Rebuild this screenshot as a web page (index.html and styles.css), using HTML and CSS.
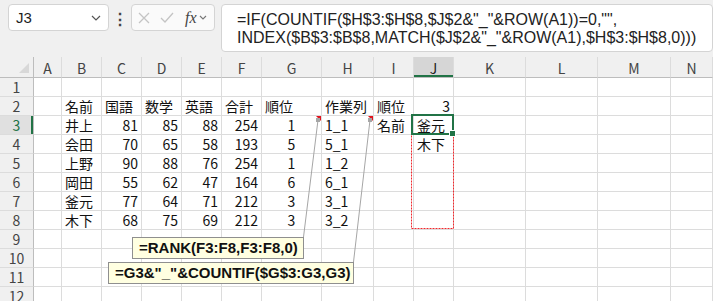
FILE: index.html
```html
<!DOCTYPE html>
<html lang="ja">
<head>
    <meta charset="UTF-8">
    <title>Book1 - Excel</title>
    <link rel="stylesheet" href="styles.css">
</head>
<body>
    <div class="toolbar">
        <div class="namebox">
            <span>J3</span>
            <svg class="chev" width="10" height="6" viewBox="0 0 10 6"><path d="M1 1l4 4 4-4" fill="none" stroke="#555" stroke-width="1.2"/></svg>
        </div>
        <div class="dots">&#8942;</div>
        <div class="fxbox">
            <svg class="ico" width="12" height="12" viewBox="0 0 12 12"><path d="M1 1l10 10M11 1L1 11" stroke="#c4c4c4" stroke-width="1.3"/></svg>
            <svg class="ico" width="14" height="12" viewBox="0 0 14 12"><path d="M1 6l4 4 8-9" fill="none" stroke="#c4c4c4" stroke-width="1.3"/></svg>
            <span class="fx">fx</span>
            <svg class="chev small" width="8" height="5" viewBox="0 0 8 5"><path d="M1 1l3 3 3-3" fill="none" stroke="#777" stroke-width="1.1"/></svg>
        </div>
        <div class="formula">
            =IF(COUNTIF($H$3:$H$8,$J$2&amp;"_"&amp;ROW(A1))=0,"",<br>
            INDEX($B$3:$B$8,MATCH($J$2&amp;"_"&amp;ROW(A1),$H$3:$H$8,0)))
        </div>
    </div>

    <div class="sheet">
        <!-- column headers -->
        <div class="corner"><span class="tri"></span></div>
        <div class="hd">A</div><div class="hd">B</div><div class="hd">C</div><div class="hd">D</div><div class="hd">E</div><div class="hd">F</div><div class="hd">G</div><div class="hd">H</div><div class="hd">I</div><div class="hd sel">J</div><div class="hd">K</div><div class="hd">L</div><div class="hd">M</div><div class="hd">N</div>

        <!-- row 1 -->
        <div class="rh">1</div>
        <div class="c"></div><div class="c"></div><div class="c"></div><div class="c"></div><div class="c"></div><div class="c"></div><div class="c"></div><div class="c"></div><div class="c"></div><div class="c"></div><div class="c"></div><div class="c"></div><div class="c"></div><div class="c"></div>

        <!-- row 2 -->
        <div class="rh">2</div>
        <div class="c"></div><div class="c">名前</div><div class="c">国語</div><div class="c">数学</div><div class="c">英語</div><div class="c">合計</div><div class="c">順位</div><div class="c">作業列</div><div class="c">順位</div><div class="c r">3</div><div class="c"></div><div class="c"></div><div class="c"></div><div class="c"></div>

        <!-- row 3 -->
        <div class="rh sel">3</div>
        <div class="c"></div><div class="c">井上</div><div class="c r">81</div><div class="c r">85</div><div class="c r">88</div><div class="c r">254</div><div class="c ctr note">1</div><div class="c note">1_1</div><div class="c">名前</div><div class="c">釜元</div><div class="c"></div><div class="c"></div><div class="c"></div><div class="c"></div>

        <!-- row 4 -->
        <div class="rh">4</div>
        <div class="c"></div><div class="c">会田</div><div class="c r">70</div><div class="c r">65</div><div class="c r">58</div><div class="c r">193</div><div class="c ctr">5</div><div class="c">5_1</div><div class="c"></div><div class="c">木下</div><div class="c"></div><div class="c"></div><div class="c"></div><div class="c"></div>

        <!-- row 5 -->
        <div class="rh">5</div>
        <div class="c"></div><div class="c">上野</div><div class="c r">90</div><div class="c r">88</div><div class="c r">76</div><div class="c r">254</div><div class="c ctr">1</div><div class="c">1_2</div><div class="c"></div><div class="c"></div><div class="c"></div><div class="c"></div><div class="c"></div><div class="c"></div>

        <!-- row 6 -->
        <div class="rh">6</div>
        <div class="c"></div><div class="c">岡田</div><div class="c r">55</div><div class="c r">62</div><div class="c r">47</div><div class="c r">164</div><div class="c ctr">6</div><div class="c">6_1</div><div class="c"></div><div class="c"></div><div class="c"></div><div class="c"></div><div class="c"></div><div class="c"></div>

        <!-- row 7 -->
        <div class="rh">7</div>
        <div class="c"></div><div class="c">釜元</div><div class="c r">77</div><div class="c r">64</div><div class="c r">71</div><div class="c r">212</div><div class="c ctr">3</div><div class="c">3_1</div><div class="c"></div><div class="c"></div><div class="c"></div><div class="c"></div><div class="c"></div><div class="c"></div>

        <!-- row 8 -->
        <div class="rh">8</div>
        <div class="c"></div><div class="c">木下</div><div class="c r">68</div><div class="c r">75</div><div class="c r">69</div><div class="c r">212</div><div class="c ctr">3</div><div class="c">3_2</div><div class="c"></div><div class="c"></div><div class="c"></div><div class="c"></div><div class="c"></div><div class="c"></div>

        <!-- rows 9 - 12 -->
        <div class="rh">9</div>
        <div class="c"></div><div class="c"></div><div class="c"></div><div class="c"></div><div class="c"></div><div class="c"></div><div class="c"></div><div class="c"></div><div class="c"></div><div class="c"></div><div class="c"></div><div class="c"></div><div class="c"></div><div class="c"></div>
        <div class="rh">10</div>
        <div class="c"></div><div class="c"></div><div class="c"></div><div class="c"></div><div class="c"></div><div class="c"></div><div class="c"></div><div class="c"></div><div class="c"></div><div class="c"></div><div class="c"></div><div class="c"></div><div class="c"></div><div class="c"></div>
        <div class="rh">11</div>
        <div class="c"></div><div class="c"></div><div class="c"></div><div class="c"></div><div class="c"></div><div class="c"></div><div class="c"></div><div class="c"></div><div class="c"></div><div class="c"></div><div class="c"></div><div class="c"></div><div class="c"></div><div class="c"></div>
        <div class="rh">12</div>
        <div class="c"></div><div class="c"></div><div class="c"></div><div class="c"></div><div class="c"></div><div class="c"></div><div class="c"></div><div class="c"></div><div class="c"></div><div class="c"></div><div class="c"></div><div class="c"></div><div class="c"></div><div class="c"></div>

        <!-- overlays: copy range, active cell, comment leaders and comments -->
        <svg class="lines" width="713" height="250" viewBox="0 0 713 250">
            <rect x="411.5" y="58.5" width="42" height="113" fill="none" stroke="#f0282d" stroke-width="1" stroke-dasharray="2 1"/>
            <line x1="318" y1="63" x2="303.5" y2="180" stroke="#a6a6a6" stroke-width="1"/>
            <line x1="370" y1="63" x2="353.5" y2="205" stroke="#a6a6a6" stroke-width="1"/>
            <path d="M316 61h4v4h-4z M368 61h4v4h-4z" fill="#a6a6a6"/>
        </svg>
        <div class="active"><span class="handle"></span></div>
        <div class="comment c1">=RANK(F3:F8,F3:F8,0)</div>
        <div class="comment c2">=G3&amp;"_"&amp;COUNTIF($G$3:G3,G3)</div>
    </div>
</body>
</html>
```

FILE: styles.css
```css
body {
    margin: 0;
    padding: 0;
    background-color: #f0f0f0; /* ribbon / header grey */
    width: 713px;
    height: 301px;
    overflow: hidden;
    font-family: 'Noto Sans CJK JP', sans-serif;
    color: #222;
}

/* ---------- formula bar ---------- */

.toolbar {
    display: flex;
    align-items: flex-start;
    height: 57px;
    padding: 4px 0 0 8px;
    box-sizing: border-box;
}

.namebox {
    width: 101px;
    height: 27px;
    box-sizing: border-box;
    background-color: #fff;
    border: 1px solid #d4d4d4;
    border-radius: 4px;
    display: flex;
    align-items: center;
    justify-content: space-between;
    padding: 0 7px 0 7px;
    font-family: 'Liberation Sans', sans-serif;
    font-size: 15px;
    color: #1e1e1e;
}

.dots {
    width: 22px;
    height: 27px;
    display: flex;
    align-items: center;
    justify-content: center;
    font-size: 16px;
    font-weight: bold;
    color: #444;
}

.fxbox {
    width: 84px;
    height: 27px;
    box-sizing: border-box;
    background-color: #fafafa;
    border: 1px solid #d4d4d4;
    border-radius: 4px;
    display: flex;
    align-items: center;
    padding: 0 4px 0 6px;
    gap: 10px;
}

.fxbox .fx {
    font-family: 'Liberation Serif', serif;
    font-style: italic;
    font-size: 16px;
    color: #444;
    margin-left: 1px;
}

.fxbox .chev.small {
    margin-left: -8px;
}

.formula {
    flex: 1;
    height: 48px;
    margin-left: 6px;
    box-sizing: border-box;
    background-color: #fff;
    border: 1px solid #d4d4d4;
    border-radius: 4px;
    padding: 6px 8px 0 15px;
    font-family: 'Liberation Sans', sans-serif;
    font-size: 16px;
    line-height: 18px;
    color: #222;
    white-space: nowrap;
}

/* ---------- sheet grid ---------- */

.sheet {
    position: relative;
    display: grid;
    grid-template-columns: 34px 28px 40px 40px 40px 40px 40px 60px 52px 40px 40px 72px 72px 73px 1fr;
    grid-template-rows: 21px;
    grid-auto-rows: 19px;
    background-color: #fff;
}

.corner,
.hd,
.rh {
    background-color: #f0f0f0;
    box-sizing: border-box;
    color: #444;
    font-size: 14px;
}

.corner {
    position: relative;
    border-right: 1px solid #bdbdbd;
    border-bottom: 1px solid #bdbdbd;
}

.corner .tri {
    position: absolute;
    right: 4px;
    bottom: 4px;
    width: 0;
    height: 0;
    border-left: 10px solid transparent;
    border-bottom: 10px solid #d8d8d8;
}

.hd {
    border-right: 1px solid #dcdcdc;
    border-bottom: 1px solid #bdbdbd;
    display: flex;
    align-items: center;
    justify-content: center;
    padding-top: 1px;
}

.hd.sel {
    background-color: #d6d6d6;
    box-shadow: inset 0 -2px 0 #217346;
    color: #1e1e1e;
}

.rh {
    border-right: 1px solid #bdbdbd;
    border-bottom: 1px solid #dcdcdc;
    display: flex;
    align-items: center;
    justify-content: center;
    line-height: 18px;
}

.rh.sel {
    background-color: #e0e0e0;
    box-shadow: inset -2px 0 0 #217346;
    color: #217346;
}

.c {
    position: relative;
    box-sizing: border-box;
    border-right: 1px solid #dcdcdc;
    border-bottom: 1px solid #dcdcdc;
    font-size: 14px;
    line-height: 18px;
    padding: 0 3px;
    white-space: nowrap;
    color: #111;
}

.c.r {
    text-align: right;
}

.c.ctr {
    text-align: center;
}

/* red comment marker in the top right corner */
.c.note::after {
    content: '';
    position: absolute;
    top: 0;
    right: 0;
    width: 0;
    height: 0;
    border-left: 5px solid transparent;
    border-top: 5px solid #e0141e;
}

/* ---------- overlays ---------- */

.lines {
    position: absolute;
    left: 0;
    top: 0;
    pointer-events: none;
}

.active {
    position: absolute;
    left: 411px;
    top: 57px;
    width: 43px;
    height: 21px;
    box-sizing: border-box;
    border: 2px solid #217346;
}

.active .handle {
    position: absolute;
    right: -4px;
    bottom: -4px;
    width: 5px;
    height: 5px;
    background-color: #217346;
    border: 1px solid #fff;
}

.comment {
    position: absolute;
    height: 22px;
    box-sizing: border-box;
    background-color: #ffffe1; /* tooltip yellow */
    border: 1px solid #8f8f8f;
    padding: 0 0 0 6px;
    font-family: 'Liberation Sans', sans-serif;
    font-weight: bold;
    font-size: 15px;
    line-height: 20px;
    color: #111;
    white-space: nowrap;
}

.comment.c1 {
    left: 132px;
    top: 180px;
    width: 172px;
}

.comment.c2 {
    left: 108px;
    top: 205px;
    width: 246px;
}
```
